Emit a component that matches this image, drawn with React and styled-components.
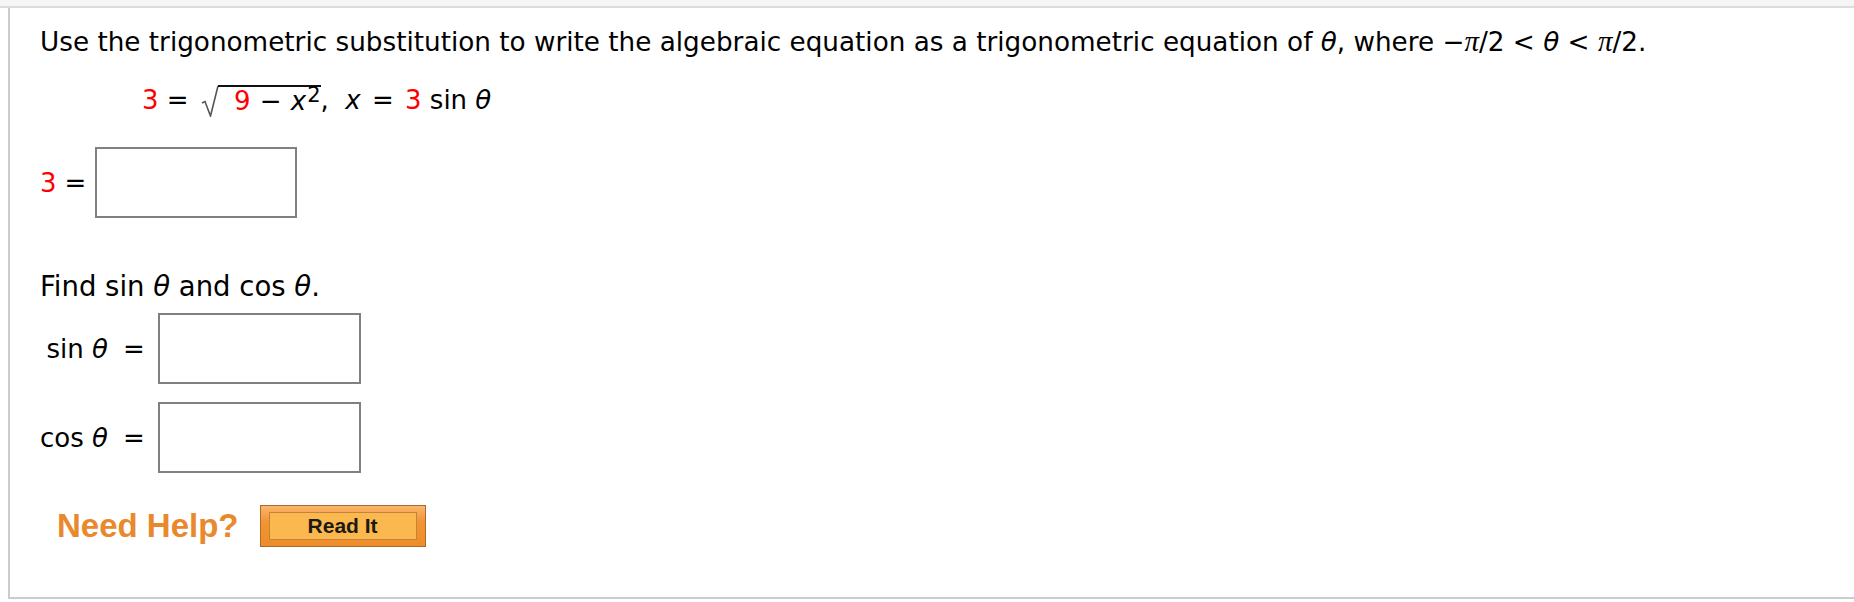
import React from 'react';
import styled, { createGlobalStyle } from 'styled-components';

const GlobalStyle = createGlobalStyle`
  html, body {
    margin: 0;
    padding: 0;
    background: #fff;
  }
  body {
    font-family: "DejaVu Sans", Verdana, sans-serif;
    color: #000;
    overflow: hidden;
  }
`;

const TopStrip = styled.div`
  height: 6px;
  background: #f5f5f5;
  border-bottom: 2px solid #dcdcdc;
`;

const Panel = styled.div`
  margin-left: 8px;
  border-left: 2px solid #cccccc;
  border-bottom: 2px solid #cccccc;
  padding: 19px 0 50px 30px;
  font-size: 26px;
`;

const Prompt = styled.div`
  height: 28px;
  line-height: 28px;
  white-space: nowrap;
  font-size: 26.25px;
`;

const MathLine = styled.div`
  display: flex;
  align-items: center;
  height: 40px;
  margin-top: 25px;
  padding-left: 102px;
  white-space: pre;
`;

const Red = styled.span`
  color: #ff0000;
`;

const Var = styled.span`
  font-style: italic;
  font-family: ${(p) => (p.$serif ? '"Liberation Serif", serif' : 'inherit')};
  font-size: ${(p) => (p.$serif ? '1.1em' : 'inherit')};
`;

const Op = styled.span`
  margin: 0 ${(p) => p.$space || 0}px;
`;

const Sup = styled.span`
  font-size: 21px;
  position: relative;
  top: -8px;
  margin-left: 1px;
`;

const Radical = styled.span`
  display: inline-flex;
  align-items: flex-start;
  height: 32px;
  margin: 2px 0 0 4px;
`;

const Radicand = styled.span`
  display: inline-block;
  border-top: 2px solid #111;
  padding: 2px 0 0 16px;
  line-height: 24px;
  margin-left: -1px;
`;

const AnswerRow = styled.div`
  display: flex;
  align-items: center;
  height: 71px;
  margin-top: ${(p) => p.$top}px;
`;

const Label = styled.span`
  display: inline-block;
  width: ${(p) => (p.$width ? `${p.$width}px` : 'auto')};
  text-align: right;
  white-space: pre;
`;

const Equals = styled.span`
  margin-left: ${(p) => p.$gap}px;
  margin-right: ${(p) => p.$after}px;
`;

const AnswerBox = styled.div`
  box-sizing: border-box;
  width: ${(p) => p.$width}px;
  height: 71px;
  border: 2px solid #808080;
  background: #fff;
`;

const SubPrompt = styled.div`
  height: 28px;
  line-height: 28px;
  margin-top: 54px;
  font-size: 27.5px;
`;

const HelpRow = styled.div`
  display: flex;
  align-items: center;
  height: 42px;
  margin-top: 32px;
  padding-left: 17px;
`;

const HelpText = styled.span`
  font-family: "Liberation Sans", Arial, sans-serif;
  font-weight: bold;
  font-size: 33px;
  color: #e9892d;
  margin-right: 21px;
`;

const ReadItButton = styled.button`
  box-sizing: border-box;
  width: 166px;
  height: 42px;
  padding: 6px 8px;
  border: 1px solid #a96a2c;
  background: linear-gradient(#f9b66c, #f19432 40%, #ee8d2a);
  cursor: pointer;
  display: flex;
`;

const ReadItInner = styled.span`
  flex: 1;
  display: flex;
  align-items: center;
  justify-content: center;
  border: 1px solid #c4823c;
  background: #fbb84f;
  font-family: "Liberation Sans", Arial, sans-serif;
  font-weight: bold;
  font-size: 21px;
  color: #1d1a14;
`;

const RadicalSign = () => (
  <svg width="18" height="32" viewBox="0 0 18 32">
    <path d="M1 18 L4 16.5 L9.5 31 L17 1" fill="none" stroke="#555" strokeWidth="1.6" />
  </svg>
);

const App = () => {
  return (
    <>
      <GlobalStyle />
      <TopStrip />
      <Panel>
        <Prompt>
          Use the trigonometric substitution to write the algebraic equation as a trigonometric
          equation of <Var>θ</Var>, where −<Var $serif>π</Var>/2 &lt; <Var>θ</Var> &lt;{' '}
          <Var $serif>π</Var>/2.
        </Prompt>
        <MathLine>
          <Red>3</Red>
          {' = '}
          <Radical>
            <RadicalSign />
            <Radicand>
              <Red>9</Red>
              <Op $space={1}>{' − '}</Op>
              <Var>x</Var>
              <Sup>2</Sup>
            </Radicand>
          </Radical>
          {',  '}
          <Var>x</Var>
          <Op $space={3}>{' = '}</Op>
          <Red>3</Red>
          {' sin '}
          <Var>θ</Var>
        </MathLine>

        <AnswerRow $top={27}>
          <Label>
            <Red>3</Red>
          </Label>
          <Equals $gap={8} $after={9}>=</Equals>
          <AnswerBox $width={202} />
        </AnswerRow>

        <SubPrompt>
          Find sin <Var>θ</Var> and cos <Var>θ</Var>.
        </SubPrompt>

        <AnswerRow $top={13}>
          <Label $width={68}>
            sin <Var>θ</Var>
          </Label>
          <Equals $gap={15} $after={13}>=</Equals>
          <AnswerBox $width={203} />
        </AnswerRow>

        <AnswerRow $top={18}>
          <Label $width={68}>
            cos <Var>θ</Var>
          </Label>
          <Equals $gap={15} $after={13}>=</Equals>
          <AnswerBox $width={203} />
        </AnswerRow>

        <HelpRow>
          <HelpText>Need Help?</HelpText>
          <ReadItButton type="button">
            <ReadItInner>Read It</ReadItInner>
          </ReadItButton>
        </HelpRow>
      </Panel>
    </>
  );
};

export default App;
